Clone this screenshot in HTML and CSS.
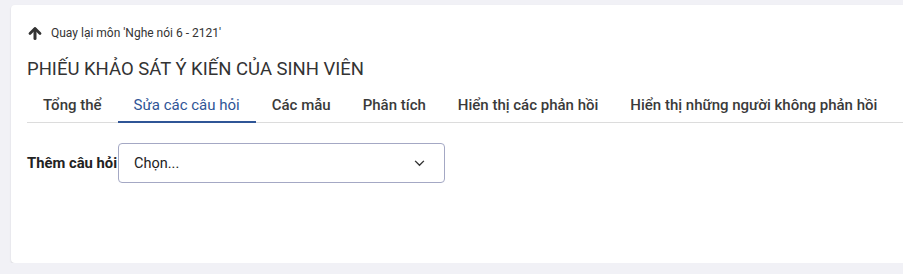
FILE: index.html
```html
<!DOCTYPE html>
<html lang="vi">

<head>
    <meta charset="UTF-8">
    <title>Phiếu khảo sát</title>
    <link rel="stylesheet" href="styles.css">
</head>

<body>

    <div class="card">
        <a class="back" href="#">
            <svg class="back-icon" viewBox="0 0 14 14" width="14" height="14">
                <path d="M2 7.5 L7 2.5 L12 7.5" fill="none" stroke="#333" stroke-width="2.8" stroke-linecap="round" stroke-linejoin="round"/>
                <path d="M7 3 L7 12.5" fill="none" stroke="#333" stroke-width="3" stroke-linecap="round"/>
            </svg>
            Quay lại môn 'Nghe nói 6 - 2121'
        </a>

        <h2 class="title">PHIẾU KHẢO SÁT Ý KIẾN CỦA SINH VIÊN</h2>

        <div class="tabs-bar">
            <ul class="tabs">
                <li class="tab">Tổng thể</li>
                <li class="tab active">Sửa các câu hỏi</li>
                <li class="tab">Các mẫu</li>
                <li class="tab">Phân tích</li>
                <li class="tab">Hiển thị các phản hồi</li>
                <li class="tab">Hiển thị những người không phản hồi</li>
            </ul>
        </div>

        <div class="add-row">
            <label class="add-label">Thêm câu hỏi</label>
            <div class="select">
                <span>Chọn...</span>
                <svg viewBox="0 0 12 8" width="11" height="7">
                    <path d="M1 1 L6 6 L11 1" fill="none" stroke="#333" stroke-width="1.6"/>
                </svg>
            </div>
        </div>
    </div>

</body>

</html>
```

FILE: styles.css
```css
body {
    margin: 0;
    background-color: #f1f1f6;
    font-family: Roboto, "Noto Sans", Arial, sans-serif;
    color: #333;
    overflow: hidden;
}

.card {
    margin: 5px 0 0 11px;
    width: 920px;
    height: 258px;
    box-sizing: border-box;
    background: #fff;
    border-radius: 4px;
    box-shadow: 0 1px 2px rgba(0, 0, 0, 0.12);
    padding: 20px 16px 0 16px;
}

.back {
    display: flex;
    align-items: center;
    gap: 9px;
    font-size: 12px;
    color: #333;
    text-decoration: none;
    height: 16px;
}

.back-icon {
    margin-left: 1px;
}

.title {
    margin: 17px 0 0 0;
    font-size: 18.5px;
    font-weight: 400;
    color: #333;
    line-height: 22px;
}

.tabs-bar {
    margin-top: 10px;
    width: 888px;
    border-bottom: 1px solid #dcdcdc;
}

.tabs {
    list-style: none;
    display: flex;
    margin: 0;
    padding: 0;
}

.tab {
    padding: 0 16px;
    height: 31px;
    line-height: 30px;
    font-size: 15px;
    font-weight: 500;
    color: #3a3a3a;
    border-bottom: 2px solid transparent;
    margin-bottom: -1px;
    white-space: nowrap;
}

.tab.active {
    color: #2f5596;
    font-weight: 400;
    border-bottom-color: #2f5596;
}

.add-row {
    display: flex;
    align-items: center;
    margin-top: 20px;
}

.add-label {
    font-size: 14.8px;
    font-weight: 700;
    color: #222;
}

.select {
    display: flex;
    align-items: center;
    justify-content: space-between;
    box-sizing: border-box;
    width: 327px;
    height: 40px;
    margin-left: 1px;
    border: 1px solid #a4a8c4;
    border-radius: 4px;
    padding: 0 19px 0 15px;
    font-size: 14.5px;
    color: #222;
}
```
